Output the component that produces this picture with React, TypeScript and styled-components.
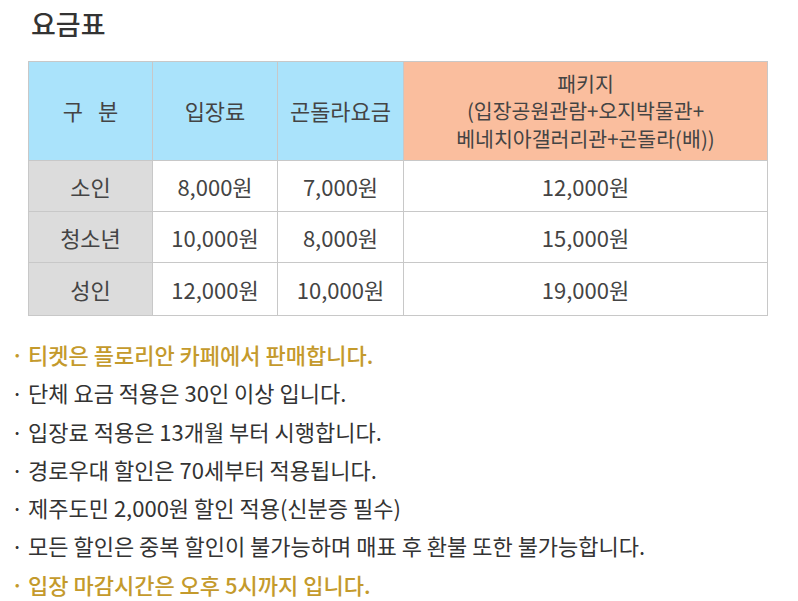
import * as React from 'react';
import styled, { createGlobalStyle } from 'styled-components';

const GlobalStyle = createGlobalStyle`
  body {
    margin: 0;
    background: #fff;
    font-family: "Noto Sans CJK KR", "Noto Sans", sans-serif;
    color: #444;
  }
`;

const rows = [
  { name: '소인', entry: '8,000원', gondola: '7,000원', pack: '12,000원' },
  { name: '청소년', entry: '10,000원', gondola: '8,000원', pack: '15,000원' },
  { name: '성인', entry: '12,000원', gondola: '10,000원', pack: '19,000원' },
];

const notes = [
  { text: '티켓은 플로리안 카페에서 판매합니다.', accent: true },
  { text: '단체 요금 적용은 30인 이상 입니다.' },
  { text: '입장료 적용은 13개월 부터 시행합니다.' },
  { text: '경로우대 할인은 70세부터 적용됩니다.' },
  { text: '제주도민 2,000원 할인 적용(신분증 필수)' },
  { text: '모든 할인은 중복 할인이 불가능하며 매표 후 환불 또한 불가능합니다.' },
  { text: '입장 마감시간은 오후 5시까지 입니다.', accent: true },
];

class App extends React.Component {
  render() {
    return (
      <Page>
        <GlobalStyle />
        <Title>요금표</Title>
        <PriceTable>
          <colgroup>
            <col style={{ width: 124 }} />
            <col style={{ width: 125 }} />
            <col style={{ width: 126 }} />
            <col />
          </colgroup>
          <thead>
            <tr>
              <HeadCell>구&nbsp;&nbsp;&nbsp;분</HeadCell>
              <HeadCell>입장료</HeadCell>
              <HeadCell>곤돌라요금</HeadCell>
              <HeadCell $tone="orange" $small>
                패키지
                <br />
                (입장공원관람+오지박물관+
                <br />
                베네치아갤러리관+곤돌라(배))
              </HeadCell>
            </tr>
          </thead>
          <tbody>
            {rows.map((r, i) => (
              <BodyRow key={r.name} $last={i === rows.length - 1}>
                <BodyCell $label>{r.name}</BodyCell>
                <BodyCell>{r.entry}</BodyCell>
                <BodyCell>{r.gondola}</BodyCell>
                <BodyCell>{r.pack}</BodyCell>
              </BodyRow>
            ))}
          </tbody>
        </PriceTable>
        <Notes>
          {notes.map((n) => (
            <Note key={n.text} $accent={n.accent}>
              <Dot>·</Dot>
              {n.text}
            </Note>
          ))}
        </Notes>
      </Page>
    );
  }
}

const Page = styled.div`
  width: 798px;
  padding-top: 7px;
`;

const Title = styled.h2`
  margin: 0 0 20px 31px;
  font-size: 27px;
  font-weight: 500;
  line-height: 34px;
  color: #333;
`;

const PriceTable = styled.table`
  margin-left: 28px;
  width: 740px;
  border-collapse: collapse;
  table-layout: fixed;
  font-size: 22px;
  color: #444;
`;

const HeadCell = styled.th<{ $tone?: 'orange'; $small?: boolean }>`
  height: 98px;
  padding: 0;
  font-weight: 400;
  font-size: ${(p) => (p.$small ? 20.5 : 22)}px;
  text-align: center;
  line-height: 27.5px;
  background: ${(p) => (p.$tone === 'orange' ? '#fabe9e' : '#aae3fb')};
  border: 1px solid #c8c8c8;
`;

const BodyRow = styled.tr<{ $last?: boolean }>`
  height: ${(p) => (p.$last ? 53 : 51)}px;
`;

const BodyCell = styled.td<{ $label?: boolean }>`
  padding: 0;
  text-align: center;
  line-height: 26px;
  background: ${(p) => (p.$label ? '#dcdcdc' : '#fff')};
  border: 1px solid #c8c8c8;
`;

const Notes = styled.ul`
  list-style: none;
  margin: 23px 0 0 0;
  padding: 0 0 0 11px;
`;

const Note = styled.li<{ $accent?: boolean }>`
  font-size: 22px;
  line-height: 30px;
  margin-bottom: 8.3px;
  color: ${(p) => (p.$accent ? '#c49a2c' : '#333')};
  font-weight: ${(p) => (p.$accent ? 500 : 400)};
`;

const Dot = styled.span`
  display: inline-block;
  width: 17px;
`;

export default App;
